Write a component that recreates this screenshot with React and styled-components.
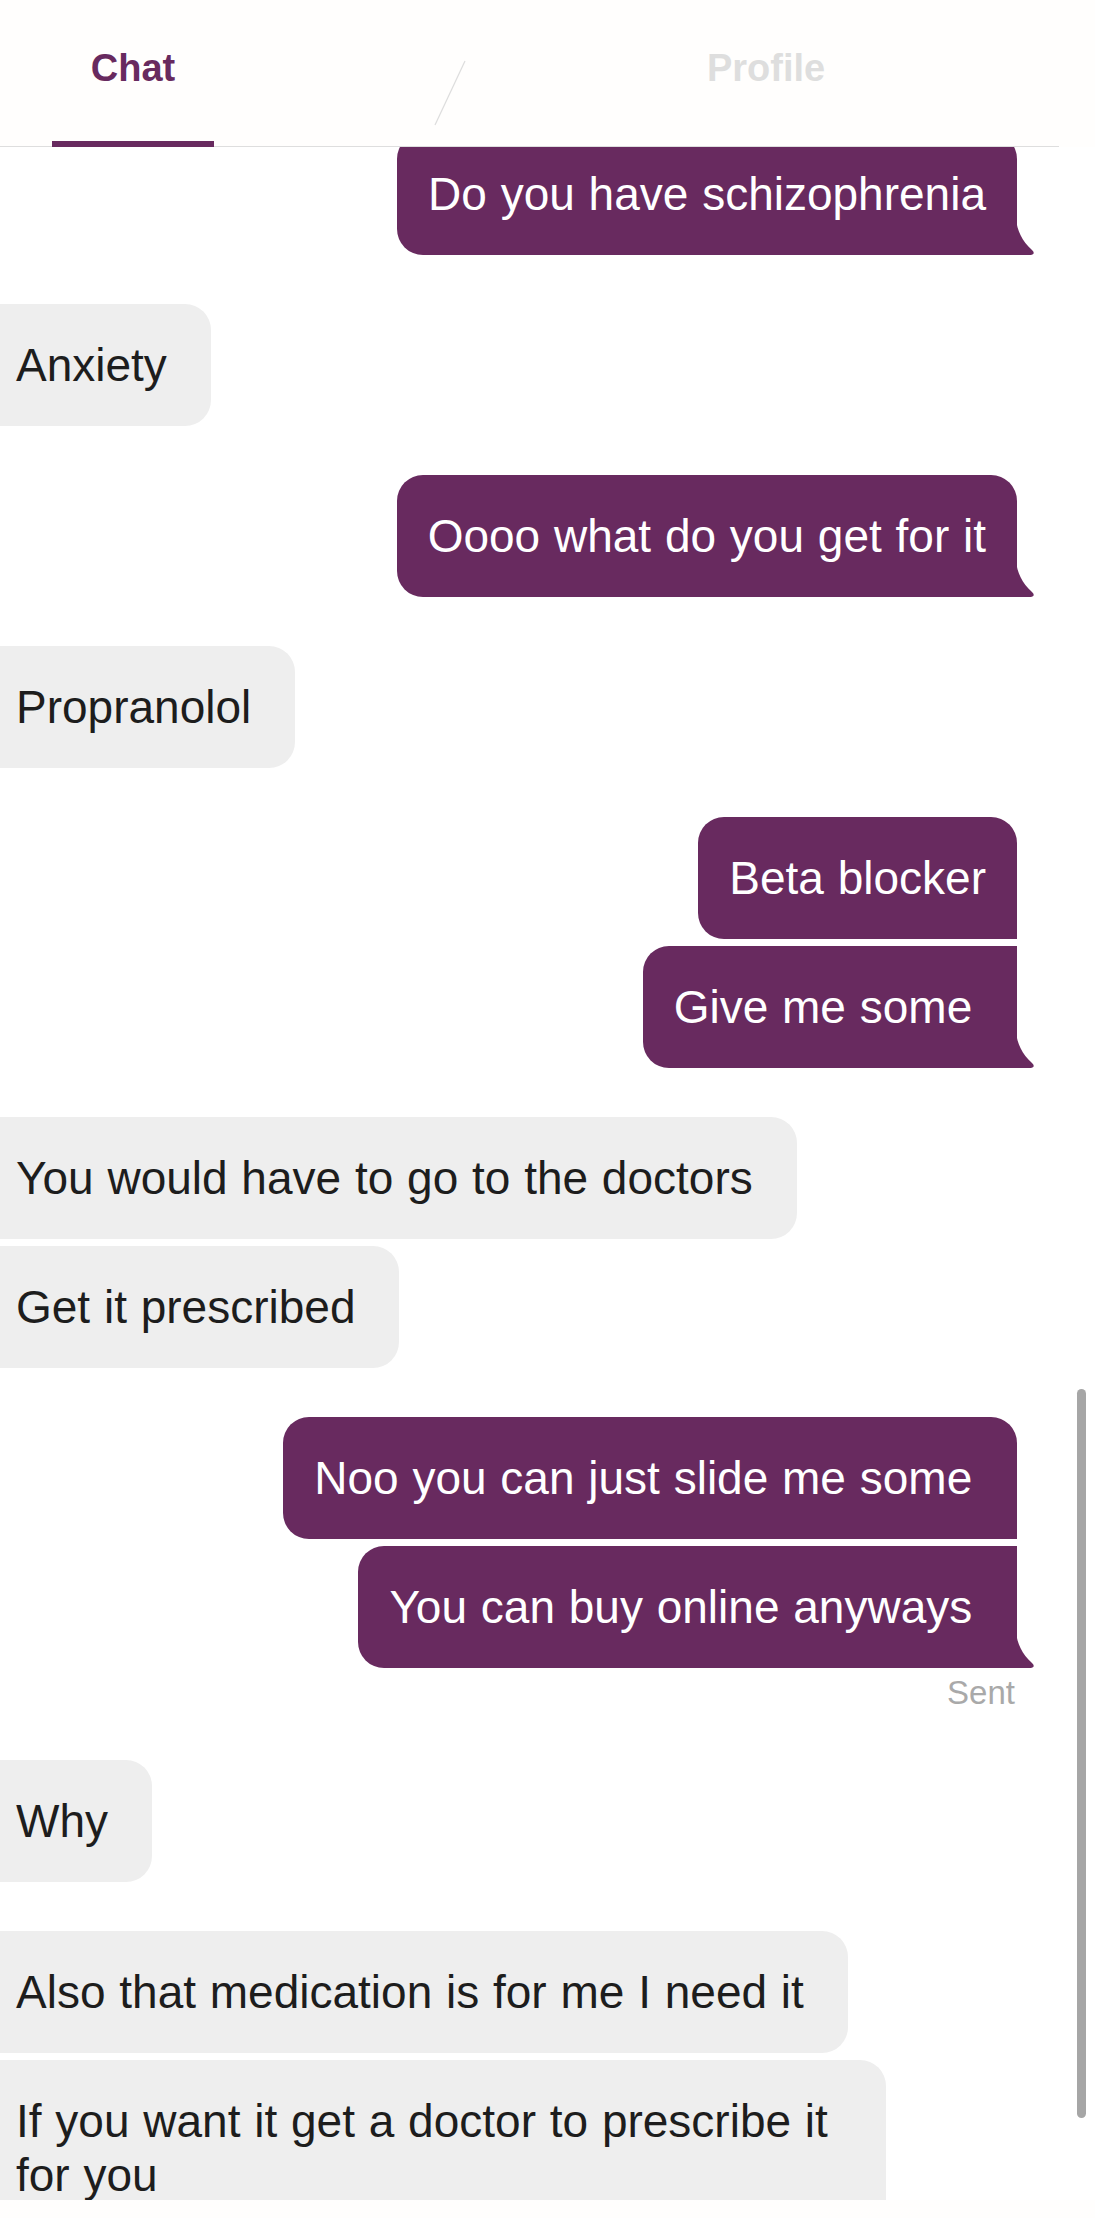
import React from 'react';
import styled, { createGlobalStyle } from 'styled-components';

const PURPLE = '#682a5f';

const GlobalStyle = createGlobalStyle`
  html, body {
    margin: 0;
    padding: 0;
    background: #ffffff;
  }
  body {
    font-family: "Liberation Sans", Arial, sans-serif;
  }
`;

const Page = styled.div`
  position: relative;
  width: 1095px;
  height: 2218px;
  display: flex;
  flex-direction: column;
  overflow: hidden;
  background: #ffffff;
`;

const Header = styled.div`
  flex: none;
  height: 147px;
  background: #fffefd;
  position: relative;
  z-index: 2;
`;

const TabRow = styled.div`
  width: 1059px;
  height: 147px;
  box-sizing: border-box;
  display: flex;
  border-bottom: 1px solid #dedede;
`;

const ChatTab = styled.div`
  margin-left: 52px;
  width: 162px;
  height: 147px;
  margin-bottom: -1px;
  box-sizing: border-box;
  border-bottom: 6px solid ${PURPLE};
  padding-bottom: 5px;
  display: flex;
  align-items: center;
  justify-content: center;
  font-size: 38px;
  font-weight: 700;
  color: ${PURPLE};
`;

const Spacer = styled.div`
  flex: 1;
`;

const Divider = styled.svg`
  flex: none;
  margin-top: 60px;
`;

const ProfileTab = styled.div`
  width: 593px;
  padding-left: 7px;
  padding-bottom: 10px;
  box-sizing: border-box;
  display: flex;
  align-items: center;
  justify-content: center;
  font-size: 38px;
  font-weight: 700;
  color: #dedede;
`;

const Thread = styled.div`
  flex: 1;
  overflow: hidden;
  display: flex;
  flex-direction: column;
  gap: 49px;
  padding-right: 78px;
`;

const Group = styled.div`
  display: flex;
  flex-direction: column;
  gap: 7px;
  align-items: ${({ $out }) => ($out ? 'flex-end' : 'flex-start')};
  &:first-child {
    margin-top: -14px;
  }
`;

const Bubble = styled.div`
  position: relative;
  box-sizing: border-box;
  max-width: 900px;
  font-size: 46px;
  line-height: 54px;
  word-spacing: 1px;
  padding: 34px ${({ $out }) => ($out ? '31px' : '44px')} 34px ${({ $out }) => ($out ? '31px' : '30px')};
  background: ${({ $out }) => ($out ? PURPLE : '#eeeeee')};
  color: ${({ $out }) => ($out ? '#ffffff' : '#1d1d1d')};
  margin-left: ${({ $out }) => ($out ? '0' : '-14px')};
  border-radius: ${({ $out, $first }) =>
    $out ? `26px ${$first ? '26px' : '0'} 0 26px` : '0 26px 26px 0'};
`;

const Tail = styled.svg`
  position: absolute;
  right: -19px;
  bottom: 0;
`;

const Status = styled.div`
  font-size: 33px;
  line-height: 36px;
  color: #a9a9a9;
  margin-right: 2px;
`;

const BottomBar = styled.div`
  flex: none;
  height: 18px;
  background: #fffefd;
`;

const ScrollThumb = styled.div`
  position: absolute;
  right: 9px;
  top: 1389px;
  width: 9px;
  height: 729px;
  border-radius: 5px;
  background: #a6a6a6;
`;

const conversation = [
  { out: true, lines: ['Do you have schizophrenia'] },
  { out: false, lines: ['Anxiety'] },
  { out: true, lines: ['Oooo what do you get for it'] },
  { out: false, lines: ['Propranolol'] },
  { out: true, lines: ['Beta blocker', 'Give me some\u00a0'] },
  { out: false, lines: ['You would have to go to the doctors', 'Get it prescribed'] },
  { out: true, lines: ['Noo you can just slide me some\u00a0', 'You can buy online anyways\u00a0'], status: 'Sent' },
  { out: false, lines: ['Why'] },
  { out: false, lines: ['Also that medication is for me I need it', 'If you want it get a doctor to prescribe it for you'] },
];

const BubbleTail = () => (
  <Tail width="20" height="36" viewBox="0 0 20 36">
    <path d="M0 0 C1 11 6 22 16 31 Q20 35 15 36 L0 36 Z" fill={PURPLE} />
  </Tail>
);

const App = () => {
  return (
    <Page>
      <GlobalStyle />
      <Header>
        <TabRow>
          <ChatTab>Chat</ChatTab>
          <Spacer />
          <Divider width="32" height="66" viewBox="0 0 32 66">
            <line x1="31" y1="1" x2="1" y2="65" stroke="#dddddd" strokeWidth="1.2" />
          </Divider>
          <ProfileTab>Profile</ProfileTab>
        </TabRow>
      </Header>
      <Thread>
        {conversation.map((group, gi) => (
          <Group key={gi} $out={group.out}>
            {group.lines.map((text, i) => (
              <Bubble
                key={i}
                $out={group.out}
                $first={i === 0}
              >
                {text}
                {group.out && i === group.lines.length - 1 && <BubbleTail />}
              </Bubble>
            ))}
            {group.status && <Status>{group.status}</Status>}
          </Group>
        ))}
      </Thread>
      <BottomBar />
      <ScrollThumb />
    </Page>
  );
};

export default App;
